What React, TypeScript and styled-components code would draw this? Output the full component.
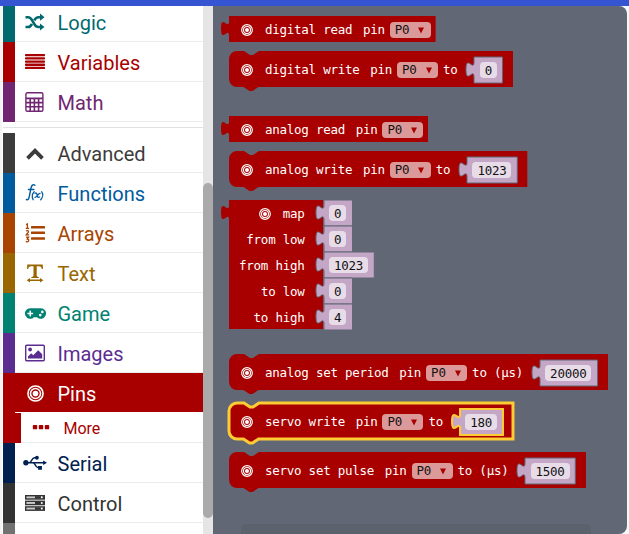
import React from "react";
import styled, { createGlobalStyle } from "styled-components";
import { FaGamepad } from "react-icons/fa";

const RED = "#a80000";
const SLATE = "#616774";
const LILAC = "#c4a7c7";
const YELLOW = "#fc3";

const GlobalStyle = createGlobalStyle`
  * { box-sizing: border-box; }
  body { margin: 0; background: #f7f8f8; overflow: hidden; }
`;

const Page = styled.div`
  width: 629px;
  height: 534px;
  display: flex;
  flex-direction: column;
  overflow: hidden;
`;

const TopBar = styled.div`
  flex: none;
  height: 6px;
  background: #3454d1;
`;

const Workspace = styled.div`
  flex: 1;
  min-height: 0;
  display: flex;
`;

const Toolbox = styled.nav`
  width: 203px;
  padding-left: 3px;
  overflow: hidden;
  background: linear-gradient(90deg, #f3f4f4 2px, #fff 2px);
  font-family: Roboto, sans-serif;
`;

const Category = styled.div<{ $color: string; $active?: boolean; $first?: boolean }>`
  height: 40px;
  margin-top: ${(p) => (p.$first ? "-4px" : "0")};
  border-left: 12px solid ${(p) => p.$color};
  padding-left: 8px;
  display: flex;
  align-items: center;
  color: ${(p) => (p.$active ? "#fff" : p.$color)};
  background: ${(p) => (p.$active ? p.$color : "#fff")};
  box-shadow: inset 0 -1px ${(p) => (p.$active ? "#fff" : "#e9ebec")};
  font-size: 20px;
  line-height: 40px;
`;

const CategoryIcon = styled.span`
  width: 24px;
  height: 24px;
  margin-right: 10.5px;
  display: flex;
  align-items: center;
  justify-content: center;
`;

const CategoryName = styled.span`
  padding-top: 2px;
`;

const SubCategory = styled.div`
  height: 30px;
  border-left: 18px solid ${RED};
  padding-left: 10px;
  display: flex;
  align-items: center;
  gap: 12.5px;
  color: ${RED};
  box-shadow: inset 0 -1px #e9ebec;
  font-size: 16px;
`;

const Divider = styled.div`
  height: 11px;
  padding-top: 5px;
  &::after {
    content: "";
    display: block;
    height: 1px;
    background: #dfe1e2;
  }
`;

const ScrollTrack = styled.div`
  width: 10px;
  padding-top: 177px;
  background: #e5e5e5;
`;

const ScrollThumb = styled.div`
  height: 335px;
  border-radius: 5px;
  background: #aaa;
`;

const Flyout = styled.main`
  width: 414px;
  padding: 10px 0 0 16px;
  overflow: hidden;
  border-radius: 0 8px 8px 0;
  background: ${SLATE};
  display: flex;
  flex-direction: column;
  font: 12.5px/16px "DejaVu Sans Mono", monospace;
  letter-spacing: -0.255px;
  color: #fff;
`;

const BlockBox = styled.div<{ $w: number; $h: number; $gap: number }>`
  position: relative;
  flex: none;
  width: ${(p) => p.$w}px;
  height: ${(p) => p.$h}px;
  margin-top: ${(p) => p.$gap}px;
`;

const Silhouette = styled.svg`
  position: absolute;
  inset: 0;
  width: 100%;
  height: 100%;
  overflow: visible;
`;

const BlockRow = styled.div<{ $h: number }>`
  position: relative;
  height: ${(p) => p.$h}px;
  padding-left: 12px;
  display: flex;
  align-items: center;
  white-space: pre;
`;

const PinIcon = styled.span<{ $drop?: number }>`
  width: 12px;
  height: 12px;
  margin-right: 12px;
  padding-top: ${(p) => p.$drop ?? 0}px;
  display: flex;
`;

const Label = styled.span<{ $after?: number }>`
  margin-right: ${(p) => p.$after ?? 0}px;
  padding-top: 1px;
`;

const Dropdown = styled.span`
  width: 41px;
  height: 16px;
  margin: 1px 5px 0 0;
  padding: 0 6.5px 0 5px;
  border-radius: 4px;
  display: flex;
  align-items: center;
  justify-content: space-between;
  background: #dc9999;
  color: #111;
`;

const DropArrow = styled.svg`
  margin-top: 2px;
`;

const ValueBox = styled.span<{ $h: number; $top: number }>`
  height: ${(p) => p.$h}px;
  margin-top: ${(p) => p.$top}px;
  position: relative;
  padding: 0 6px;
  display: flex;
  align-items: center;
`;

const NumberField = styled.span`
  position: relative;
  height: 16px;
  margin-left: -0.5px;
  padding: 0 5px;
  border-radius: 4px;
  background: #e7dce8;
  color: #111;
  line-height: 17px;
`;

const MapRow = styled.div`
  height: 26px;
  display: flex;
  align-items: center;
  white-space: pre;
`;

const MapLabel = styled.span`
  flex: none;
  width: 75.5px;
  margin-right: 19px;
  padding-top: 1px;
  display: flex;
  align-items: center;
  justify-content: flex-end;
`;

const MapRows = styled.div`
  position: relative;
`;

const NextPanel = styled.div`
  flex: none;
  width: 350px;
  height: 16px;
  margin: 36px 0 0 12px;
  border-radius: 5px;
  background: #5c626d;
`;

const Rings = ({ size }: { size: number }) => (
  <svg width={size} height={size} viewBox="0 0 18 18" fill="none" stroke="currentColor" strokeWidth="1.7">
    <circle cx="9" cy="9" r="8" />
    <circle cx="9" cy="9" r="5.3" />
    <circle cx="9" cy="9" r="3" fill="currentColor" stroke="none" />
  </svg>
);

const ShuffleIcon = () => (
  <svg width="20" height="18" viewBox="0 0 20 18" fill="none" stroke="currentColor" strokeWidth="2.6">
    <path d="M0.5 4.2H3.2C5 4.2 6 5.4 7 7.2L9.5 11.4C10.7 13.4 11.7 14 13.4 14H16M.5 14H3.2C5 14 6 12.8 7 11M9.3 7.3C10.6 5 11.5 4.2 13.4 4.2H16" />
    <path d="M15 0.6l4.5 3.6L15 7.8zM15 10.4l4.5 3.6-4.5 3.6z" fill="currentColor" stroke="none" />
  </svg>
);

const LinesIcon = () => (
  <svg width="20" height="16" viewBox="0 0 20 16" fill="currentColor">
    {[0, 3.2, 6.4, 9.6, 12.8].map((y) => (
      <rect key={y} y={y} width="20" height="2.3" rx=".7" />
    ))}
  </svg>
);

const CalculatorIcon = () => (
  <svg width="20" height="20" viewBox="0 0 20 20" fill="none" stroke="currentColor">
    <rect x=".9" y=".8" width="17" height="18.5" rx="1.4" strokeWidth="1.4" />
    <path d="M1 6.4h17" strokeWidth="1.8" />
    <path d="M1 10.6h17M1 14.8h17M5.2 6v13M9.4 6v13M13.6 6v13" strokeWidth="1.6" />
  </svg>
);

const ChevronIcon = () => (
  <svg width="20" height="14" viewBox="0 0 20 14" fill="none" stroke="currentColor" strokeWidth="3.8">
    <path d="M2.5 12.3L10 4.8l7.5 7.5" />
  </svg>
);

const FunctionIcon = () => (
  <svg width="20" height="24" viewBox="0 0 20 24" fill="none" stroke="currentColor" strokeLinecap="round">
    <path d="M10 4.2C8 2.8 6.5 4.4 6 7L4.1 16.3C3.7 18.4 2.7 19.1 1.4 18.5M3.4 8.5h5.5" strokeWidth="1.4" />
    <path d="M9.2 10.8C7 13 6.8 16 8.2 18.7M16.7 10.8c1.6 2.2 1.2 5.6-1 7.9" strokeWidth="1.3" />
    <path d="M10 12.3c1.5-.8 1.9.2 2.2 2.1.3 1.7.9 2.4 2.3 1.6M15 12.3c-1.7-.4-3 4.3-5 4" strokeWidth="1.3" />
  </svg>
);

const NumberedListIcon = () => (
  <svg width="20" height="20" viewBox="0 0 20 20" fill="currentColor">
    <rect x="6" y="3" width="14" height="2.5" rx=".5" />
    <rect x="6" y="8.6" width="14" height="2.5" rx=".5" />
    <rect x="6" y="14.2" width="14" height="2.5" rx=".5" />
    <g fill="none" stroke="currentColor" strokeWidth="1.3">
      <path d="M1 1.7l1.4-.7v4.5M.8 5.3h3.3" />
      <path d="M1 8.1C2 7.2 3.6 7.5 3.5 8.8 3.4 9.9 2 10.6 1.2 11.8H4.1" />
      <path d="M1 14.2h2.6L2.3 16c2.2.2 1.8 2.9-.3 2.8l-1.2-.3" />
    </g>
  </svg>
);

const TextWidthIcon = () => (
  <svg width="20" height="20" viewBox="0 0 20 20" fill="currentColor">
    <path d="M2.3 1.5h15.4l.3 4.6h-1.1C16.4 3.9 15.5 3.2 13.8 3.2h-2.1v9.1c0 1.2.5 1.4 2.1 1.6v1H6.4v-1c1.6-.2 2.1-.4 2.1-1.6V3.2H6.2C4.5 3.2 3.6 3.9 3.1 6.1H2zM1.7 17.2L5 15.1v1.4h10v-1.4l3.4 2.1-3.4 2.2V18H5v1.4z" />
  </svg>
);

const ImageIcon = () => (
  <svg width="20" height="18" viewBox="0 0 20 18" fill="none" stroke="currentColor">
    <rect x=".7" y="1.2" width="18.6" height="15.6" rx="1" strokeWidth="1.4" />
    <circle cx="5.1" cy="5.5" r="1.9" fill="currentColor" stroke="none" />
    <path d="M3 14.5v-2l3.2-3.2 2 2 5-5 4 4v4.2z" fill="currentColor" stroke="none" />
  </svg>
);

const UsbIcon = () => (
  <svg width="24" height="16" viewBox="0 0 25 16" fill="none" stroke="currentColor" strokeWidth="1.5">
    <path d="M3 7.7h19M6.5 7.7C9 7.7 9 2.5 12 2.5h2.5M10.5 7.7c2.3 0 2.2 5 5 5h2" />
    <circle cx="3" cy="7.7" r="2.8" fill="currentColor" stroke="none" />
    <circle cx="14.5" cy="2.5" r="2" fill="currentColor" stroke="none" />
    <path d="M15.7 11h4v4h-4zM21 5.4l4 2.3-4 2.3z" fill="currentColor" stroke="none" />
  </svg>
);

const ServerIcon = () => (
  <svg width="20" height="16" viewBox="0 0 20 16">
    {[0, 5.6, 11.2].map((y) => (
      <g key={y}>
        <rect x=".7" y={y + 0.7} width="18.6" height="3.3" fill="#ccc" stroke="currentColor" strokeWidth="1.4" />
        <path d={`M10 ${y + 2.4}h9`} stroke="currentColor" strokeWidth="2.4" />
        <circle cx="16.8" cy={y + 2.3} r="1" fill="#fff" />
      </g>
    ))}
  </svg>
);

const DotsIcon = () => (
  <svg width="20" height="20" viewBox="0 0 20 20" fill="currentColor">
    {[2, 8, 14].map((x) => (
      <rect key={x} x={x - 0.2} y="6.9" width="4.4" height="4.4" rx=".9" />
    ))}
  </svg>
);

type CategoryData = { name: string; color: string; icon: React.ReactNode; active?: boolean };

const basic: CategoryData[] = [
  { name: "Logic", color: "#006970", icon: <ShuffleIcon /> },
  { name: "Variables", color: RED, icon: <LinesIcon /> },
  { name: "Math", color: "#712672", icon: <CalculatorIcon /> },
];

const advanced: CategoryData[] = [
  { name: "Advanced", color: "#3c3c3c", icon: <ChevronIcon /> },
  { name: "Functions", color: "#005a9e", icon: <FunctionIcon /> },
  { name: "Arrays", color: "#a94400", icon: <NumberedListIcon /> },
  { name: "Text", color: "#996600", icon: <TextWidthIcon /> },
  { name: "Game", color: "#008272", icon: <FaGamepad size={21} /> },
  { name: "Images", color: "#5c2d91", icon: <ImageIcon /> },
  { name: "Pins", color: RED, icon: <Rings size={17} />, active: true },
];

const trailing: CategoryData[] = [
  { name: "Serial", color: "#002050", icon: <UsbIcon /> },
  { name: "Control", color: "#333333", icon: <ServerIcon /> },
];

const CategoryItem = ({ data, first }: { data: CategoryData; first?: boolean }) => (
  <Category $color={data.color} $active={data.active} $first={first}>
    <CategoryIcon>{data.icon}</CategoryIcon>
    <CategoryName>{data.name}</CategoryName>
  </Category>
);

const TAB = "V20c0-10-8 8-8-7.5s8 2.5 8-7.5";

const statementPath = (w: number, h: number) =>
  `M0 8A8 8 0 0 1 8 0H15l6 4h3l6-4H${w}V${h}H29.5l-6 4h-3l-6-4H8a8 8 0 0 1-8-8z`;

const reporterPath = (w: number, h: number) => `M0 0H${w}V${h}H0${TAB}z`;

const Value = ({ text, outline = SLATE, top = 0 }: { text: string; outline?: string; top?: number }) => {
  const h = 26;
  const w = text.length * 7.27 + 21.2;
  return (
    <ValueBox $h={h} $top={top}>
      <Silhouette>
        <path d={reporterPath(w, h)} fill={LILAC} stroke={outline} strokeWidth={outline === YELLOW ? 2 : 1} />
      </Silhouette>
      <NumberField>{text}</NumberField>
    </ValueBox>
  );
};

type BlockData = {
  label: string;
  width: number;
  gap: number;
  tail?: string;
  value?: string;
  selected?: boolean;
};

const upper: BlockData[] = [
  { label: "digital read", width: 206.6, gap: 0 },
  { label: "digital write", width: 284, gap: 9, tail: "to", value: "0" },
  { label: "analog read", width: 199, gap: 29 },
  { label: "analog write", width: 298.3, gap: 9, tail: "to", value: "1023" },
];

const lower: BlockData[] = [
  { label: "analog set period", width: 379, gap: 25, tail: "to (µs)", value: "20000" },
  { label: "servo write", width: 284, gap: 13, tail: "to", value: "180", selected: true },
  { label: "servo set pulse", width: 357, gap: 13, tail: "to (µs)", value: "1500" },
];

const Block = ({ label, width, gap, tail, value, selected }: BlockData) => {
  const h = value ? 36 : 26;
  return (
    <BlockBox $w={width} $h={h} $gap={gap}>
      <Silhouette>
        <path
          d={value ? statementPath(width, h) : reporterPath(width, h)}
          fill={RED}
          stroke={selected ? YELLOW : "none"}
          strokeWidth="3"
        />
      </Silhouette>
      <BlockRow $h={h}>
        <PinIcon $drop={1}>
          <Rings size={12} />
        </PinIcon>
        <Label $after={10.7}>{label}</Label>
        <Label $after={5}>pin</Label>
        <Dropdown>
          P0
          <DropArrow width="6" height="7" viewBox="0 0 6 7" fill={RED}>
            <path d="M0 .5h6L3 6.5z" />
          </DropArrow>
        </Dropdown>
        {tail && <Label $after={16.6}>{tail}</Label>}
        {value && <Value text={value} outline={selected ? YELLOW : SLATE} top={1.2} />}
      </BlockRow>
    </BlockBox>
  );
};

const mapInputs = [
  { label: "map", value: "0", icon: true },
  { label: "from low", value: "0" },
  { label: "from high", value: "1023" },
  { label: "to low", value: "0" },
  { label: "to high", value: "4" },
];

const MapBlock = () => (
  <BlockBox $w={94} $h={129} $gap={13}>
    <Silhouette>
      <path d={reporterPath(94, 129)} fill={RED} />
    </Silhouette>
    <MapRows>
      {mapInputs.map((row) => (
        <MapRow key={row.label}>
          <MapLabel>
            {row.icon && (
              <PinIcon>
                <Rings size={12} />
              </PinIcon>
            )}
            {row.label}
          </MapLabel>
          <Value text={row.value} />
        </MapRow>
      ))}
    </MapRows>
  </BlockBox>
);

export default function App() {
  return (
    <>
      <GlobalStyle />
      <Page>
        <TopBar />
        <Workspace>
          <Toolbox>
            {basic.map((c, i) => (
              <CategoryItem key={c.name} data={c} first={i === 0} />
            ))}
            <Divider />
            {advanced.map((c) => (
              <CategoryItem key={c.name} data={c} />
            ))}
            <SubCategory>
              <DotsIcon />
              More
            </SubCategory>
            {trailing.map((c) => (
              <CategoryItem key={c.name} data={c} />
            ))}
            <Category $color="#717171" />
          </Toolbox>
          <ScrollTrack>
            <ScrollThumb />
          </ScrollTrack>
          <Flyout>
            {upper.map((b) => (
              <Block key={b.label} {...b} />
            ))}
            <MapBlock />
            {lower.map((b) => (
              <Block key={b.label} {...b} />
            ))}
            <NextPanel />
          </Flyout>
        </Workspace>
      </Page>
    </>
  );
}
